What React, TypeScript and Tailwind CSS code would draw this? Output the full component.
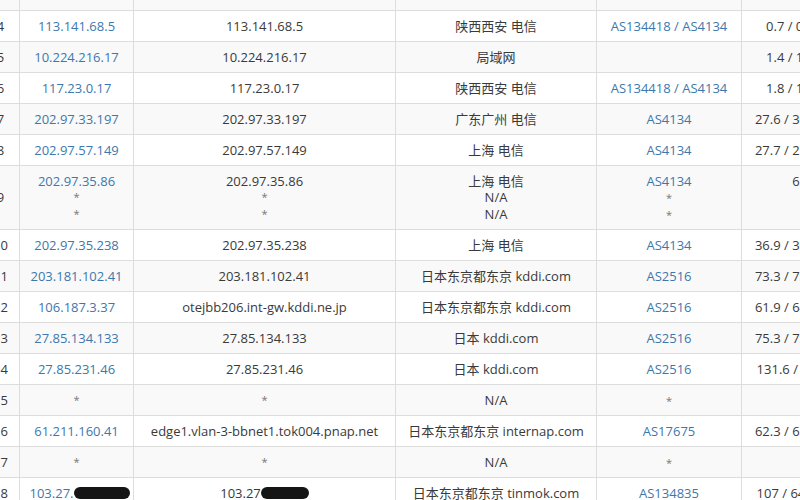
import React from 'react';

type Hop = {
  hop: number;
  ip: string[];
  host: string[];
  loc: string[];
  asn: string[][];
  lat: string[];
  redacted?: boolean;
};

const hops: Hop[] = [
  { hop: 4, ip: ['113.141.68.5'], host: ['113.141.68.5'], loc: ['陕西西安 电信'], asn: [['AS134418', 'AS4134']], lat: ['0.7 / 0.8 / 0.9'] },
  { hop: 5, ip: ['10.224.216.17'], host: ['10.224.216.17'], loc: ['局域网'], asn: [[]], lat: ['1.4 / 1.5 / 1.3'] },
  { hop: 6, ip: ['117.23.0.17'], host: ['117.23.0.17'], loc: ['陕西西安 电信'], asn: [['AS134418', 'AS4134']], lat: ['1.8 / 1.6 / 1.7'] },
  { hop: 7, ip: ['202.97.33.197'], host: ['202.97.33.197'], loc: ['广东广州 电信'], asn: [['AS4134']], lat: ['27.6 / 30.2 / 28.1'] },
  { hop: 8, ip: ['202.97.57.149'], host: ['202.97.57.149'], loc: ['上海 电信'], asn: [['AS4134']], lat: ['27.7 / 27.9 / 28.0'] },
  { hop: 9, ip: ['202.97.35.86', '*', '*'], host: ['202.97.35.86', '*', '*'], loc: ['上海 电信', 'N/A', 'N/A'], asn: [['AS4134'], ['*'], ['*']], lat: ['62.4', '', ''] },
  { hop: 10, ip: ['202.97.35.238'], host: ['202.97.35.238'], loc: ['上海 电信'], asn: [['AS4134']], lat: ['36.9 / 36.7 / 37.0'] },
  { hop: 11, ip: ['203.181.102.41'], host: ['203.181.102.41'], loc: ['日本东京都东京 kddi.com'], asn: [['AS2516']], lat: ['73.3 / 73.5 / 73.1'] },
  { hop: 12, ip: ['106.187.3.37'], host: ['otejbb206.int-gw.kddi.ne.jp'], loc: ['日本东京都东京 kddi.com'], asn: [['AS2516']], lat: ['61.9 / 64.2 / 62.0'] },
  { hop: 13, ip: ['27.85.134.133'], host: ['27.85.134.133'], loc: ['日本 kddi.com'], asn: [['AS2516']], lat: ['75.3 / 73.8 / 74.1'] },
  { hop: 14, ip: ['27.85.231.46'], host: ['27.85.231.46'], loc: ['日本 kddi.com'], asn: [['AS2516']], lat: ['131.6 / 74.9 / 75'] },
  { hop: 15, ip: ['*'], host: ['*'], loc: ['N/A'], asn: [['*']], lat: [''] },
  { hop: 16, ip: ['61.211.160.41'], host: ['edge1.vlan-3-bbnet1.tok004.pnap.net'], loc: ['日本东京都东京 internap.com'], asn: [['AS17675']], lat: ['62.3 / 62.5 / 62.4'] },
  { hop: 17, ip: ['*'], host: ['*'], loc: ['N/A'], asn: [['*']], lat: [''] },
  { hop: 18, ip: ['103.27.'], host: ['103.27'], loc: ['日本东京都东京 tinmok.com'], asn: [['AS134835']], lat: ['107 / 64.5 / 64.3'], redacted: true },
];

const cols = 'grid grid-cols-[41px_114px_262px_201px_145px_127px]';
const cell = 'border-r border-[#dddddd] flex flex-col items-center justify-center whitespace-nowrap overflow-hidden';
const link = 'text-[#3d78ad]';
const star = 'text-[11px] text-[#777]';

function Lines({ items, isLink }: { items: string[]; isLink?: boolean }) {
  return (
    <>
      {items.map((t, i) => (
        <div
          key={i}
          className={`h-[16.5px] leading-[16.5px] ${t === '*' ? star : isLink ? link : 'text-[#3a3a3a]'}`}
        >
          {t}
        </div>
      ))}
    </>
  );
}

function Blot({ w }: { w: string }) {
  return <span className={`inline-block ${w} h-[12px] rounded-full bg-[#151515] align-middle`} />;
}

export default function App() {
  return (
    <div
      className="w-[800px] h-[500px] overflow-hidden bg-white text-[13px] text-[#3a3a3a]"
      style={{ fontFamily: '"Open Sans", "Noto Sans CJK SC", sans-serif' }}
    >
      <div className="-ml-[21px] w-[890px]">
        {/* cut-off hop 3 */}
        <div className={`${cols} h-[11px] border-b border-[#dddddd] bg-[#f9f9f9]`}>
          {[0, 1, 2, 3, 4, 5].map(i => <div key={i} className={cell} />)}
        </div>

        {hops.map(h => {
          const tall = h.ip.length > 1;
          return (
            <div
              key={h.hop}
              className={`${cols} ${tall ? 'h-[64px]' : 'h-[31px]'} border-b border-[#dddddd] ${h.hop % 2 ? 'bg-[#f9f9f9]' : 'bg-white'}`}
            >
              <div className={cell}><div className="leading-[16.5px] pl-[3px]">{h.hop}</div></div>

              <div className={cell}>
                {h.redacted ? (
                  <div className="flex items-center leading-[16.5px] pl-[6px]">
                    <span className={link}>{h.ip[0]}</span>
                    <Blot w="w-[56px]" />
                  </div>
                ) : (
                  <Lines items={h.ip} isLink />
                )}
              </div>

              <div className={cell}>
                {h.redacted ? (
                  <div className="flex items-center leading-[16.5px]">
                    <span>{h.host[0]}</span>
                    <Blot w="w-[48px]" />
                  </div>
                ) : (
                  <Lines items={h.host} />
                )}
              </div>

              <div className={cell}><Lines items={h.loc} /></div>

              <div className={cell}>
                {h.asn.map((list, i) => (
                  <div key={i} className="h-[16.5px] leading-[16.5px]">
                    {list.map((a, j) => (
                      <React.Fragment key={a}>
                        {j > 0 && <span className={link}> / </span>}
                        <a className={a === '*' ? star : link}>{a}</a>
                      </React.Fragment>
                    ))}
                  </div>
                ))}
              </div>

              <div className={cell}><Lines items={h.lat} /></div>
            </div>
          );
        })}
      </div>
    </div>
  );
}
